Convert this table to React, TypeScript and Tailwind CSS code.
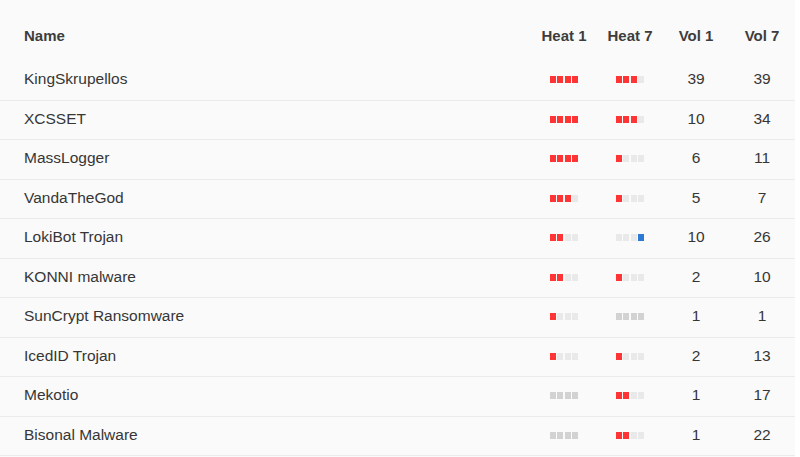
import React from 'react';

type Cell = 'r' | 'l' | 'd' | 'b';

interface Row {
  name: string;
  heat1: Cell[];
  heat7: Cell[];
  vol1: number;
  vol7: number;
}

const ROWS: Row[] = [
  {name: 'KingSkrupellos', heat1: ['r', 'r', 'r', 'r'], heat7: ['r', 'r', 'r', 'l'], vol1: 39, vol7: 39},
  {name: 'XCSSET', heat1: ['r', 'r', 'r', 'r'], heat7: ['r', 'r', 'r', 'l'], vol1: 10, vol7: 34},
  {name: 'MassLogger', heat1: ['r', 'r', 'r', 'r'], heat7: ['r', 'l', 'l', 'l'], vol1: 6, vol7: 11},
  {name: 'VandaTheGod', heat1: ['r', 'r', 'r', 'l'], heat7: ['r', 'l', 'l', 'l'], vol1: 5, vol7: 7},
  {name: 'LokiBot Trojan', heat1: ['r', 'r', 'l', 'l'], heat7: ['l', 'l', 'l', 'b'], vol1: 10, vol7: 26},
  {name: 'KONNI malware', heat1: ['r', 'r', 'l', 'l'], heat7: ['r', 'l', 'l', 'l'], vol1: 2, vol7: 10},
  {name: 'SunCrypt Ransomware', heat1: ['r', 'l', 'l', 'l'], heat7: ['d', 'd', 'd', 'd'], vol1: 1, vol7: 1},
  {name: 'IcedID Trojan', heat1: ['r', 'l', 'l', 'l'], heat7: ['r', 'l', 'l', 'l'], vol1: 2, vol7: 13},
  {name: 'Mekotio', heat1: ['d', 'd', 'd', 'd'], heat7: ['r', 'r', 'l', 'l'], vol1: 1, vol7: 17},
  {name: 'Bisonal Malware', heat1: ['d', 'd', 'd', 'd'], heat7: ['r', 'r', 'l', 'l'], vol1: 1, vol7: 22},
];

const cellClass: Record<Cell, string> = {
  r: 'bg-[#ff3434]',
  l: 'bg-[#e9e9e9]',
  d: 'bg-[#d2d2d2]',
  b: 'bg-[#2c7ad6]',
};

function HeatBar({cells}: {cells: Cell[]}) {
  return (
    <div className="flex justify-center gap-[1.5px]">
      {cells.map((c, i) => (
        <span key={i} className={`block w-[6px] h-[7px] ${cellClass[c]}`} />
      ))}
    </div>
  );
}

export default function App() {
  return (
    <div className="flex w-[800px] h-[457px] overflow-hidden bg-white font-['Liberation_Sans',Arial,sans-serif] text-[15.5px] text-[#363636]">
      <div className="w-[795px] bg-[#fafafa]">
        <div className="flex h-[61px] pt-[26px] leading-5 text-[15px] font-bold text-[#3d3d3d]">
          <div className="flex-1 pl-6">Name</div>
          <div className="w-[66px] text-center">Heat 1</div>
          <div className="w-[66px] text-center">Heat 7</div>
          <div className="w-[66px] text-center">Vol 1</div>
          <div className="w-[66px] text-center">Vol 7</div>
        </div>
        {ROWS.map((row) => (
          <div
            key={row.name}
            className="flex items-center h-[39.5px] border-b border-[#ebebeb] leading-5"
          >
            <div className="flex-1 pl-6 pb-[2px]">{row.name}</div>
            <div className="w-[66px] pb-[1px]">
              <HeatBar cells={row.heat1} />
            </div>
            <div className="w-[66px] pb-[1px]">
              <HeatBar cells={row.heat7} />
            </div>
            <div className="w-[66px] text-center pb-[2px]">{row.vol1}</div>
            <div className="w-[66px] text-center pb-[2px]">{row.vol7}</div>
          </div>
        ))}
      </div>
    </div>
  );
}
